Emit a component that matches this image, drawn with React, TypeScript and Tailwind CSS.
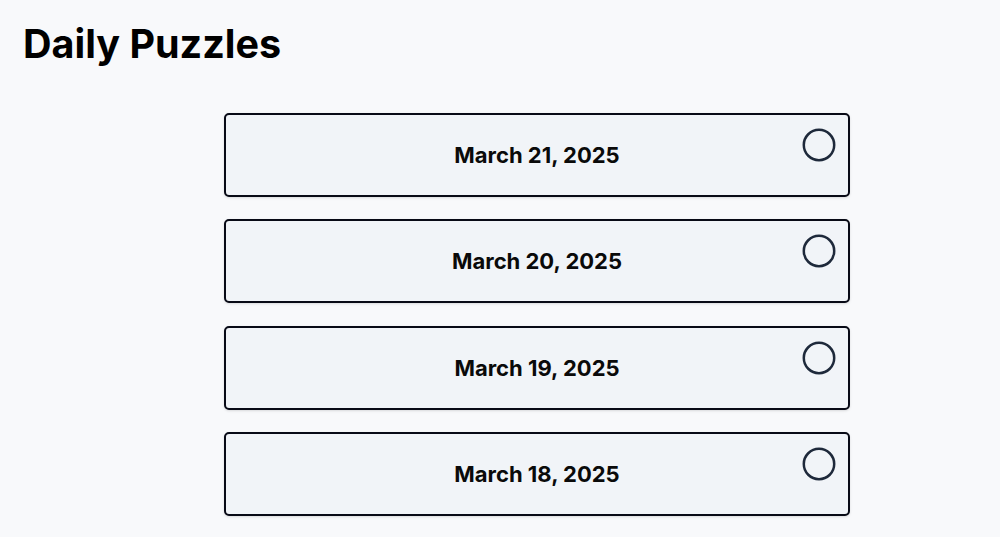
const dates = ['March 21, 2025', 'March 20, 2025', 'March 19, 2025', 'March 18, 2025'];

function PuzzleCard({ date }: { date: string }) {
  return (
    <div className="relative flex h-[84px] items-center justify-center rounded-[5px] border-2 border-[#080a16] bg-[#f1f4f8] shadow-sm">
      <span className="pt-[1px] text-[22px] font-bold text-[#0a0a0a]">{date}</span>
      <svg
        className="absolute right-[12px] top-[13px]"
        width="34"
        height="34"
        viewBox="0 0 34 34"
        fill="none"
      >
        <circle cx="17" cy="17" r="15.2" stroke="#1e293b" strokeWidth="2.5" />
      </svg>
    </div>
  );
}

export default function App() {
  return (
    <div className="min-h-[537px] bg-[#f8f9fb] font-['Inter',sans-serif]">
      <h1 className="px-[23px] pt-[20px] text-[39.5px] font-bold leading-[48px] text-black">Daily Puzzles</h1>
      <div className="ml-[224px] mt-[45px] flex w-[626px] flex-col gap-[22.3px]">
        {dates.map((d) => (
          <PuzzleCard key={d} date={d} />
        ))}
      </div>
    </div>
  );
}
